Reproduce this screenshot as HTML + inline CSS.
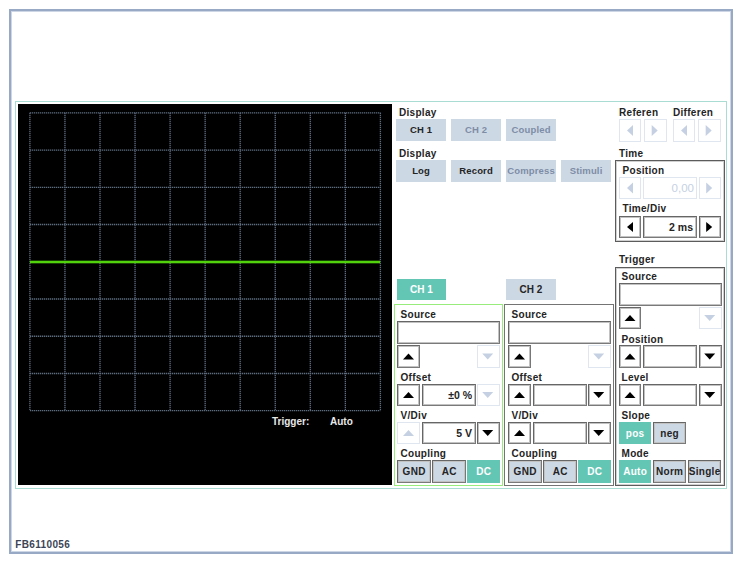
<!DOCTYPE html>
<html><head><meta charset="utf-8"><style>
html,body{margin:0;padding:0;background:#fff;}
body{width:742px;height:563px;position:relative;overflow:hidden;font-family:'Liberation Sans', sans-serif;}
</style></head><body>
<div style="position:absolute;left:9px;top:9px;width:724px;height:545px;box-sizing:border-box;border:2px solid #97a9c5;box-shadow:inset 0 0 0 1px #ccd6e5;"></div>
<div style="position:absolute;left:15.3px;top:540.03px;font:bold 10px/10px 'Liberation Sans', sans-serif;color:#3c4556;white-space:nowrap;letter-spacing:0.35px;">FB6110056</div>
<div style="position:absolute;left:15px;top:101px;width:712px;height:388px;box-sizing:border-box;border:1px solid #a9ddd3;"></div>
<div style="position:absolute;left:18px;top:104px;width:374px;height:381px;box-sizing:border-box;background:#000;"></div>
<svg width="742" height="563" style="position:absolute;left:0;top:0">
<line x1="29.90" y1="112.8" x2="29.90" y2="410.7" stroke="#5e6c80" stroke-width="1.3" stroke-dasharray="1.3 0.7"/>
<line x1="64.95" y1="112.8" x2="64.95" y2="410.7" stroke="#5e6c80" stroke-width="1.3" stroke-dasharray="1.3 0.7"/>
<line x1="100.00" y1="112.8" x2="100.00" y2="410.7" stroke="#5e6c80" stroke-width="1.3" stroke-dasharray="1.3 0.7"/>
<line x1="135.05" y1="112.8" x2="135.05" y2="410.7" stroke="#5e6c80" stroke-width="1.3" stroke-dasharray="1.3 0.7"/>
<line x1="170.10" y1="112.8" x2="170.10" y2="410.7" stroke="#5e6c80" stroke-width="1.3" stroke-dasharray="1.3 0.7"/>
<line x1="205.15" y1="112.8" x2="205.15" y2="410.7" stroke="#5e6c80" stroke-width="1.3" stroke-dasharray="1.3 0.7"/>
<line x1="240.20" y1="112.8" x2="240.20" y2="410.7" stroke="#5e6c80" stroke-width="1.3" stroke-dasharray="1.3 0.7"/>
<line x1="275.25" y1="112.8" x2="275.25" y2="410.7" stroke="#5e6c80" stroke-width="1.3" stroke-dasharray="1.3 0.7"/>
<line x1="310.30" y1="112.8" x2="310.30" y2="410.7" stroke="#5e6c80" stroke-width="1.3" stroke-dasharray="1.3 0.7"/>
<line x1="345.35" y1="112.8" x2="345.35" y2="410.7" stroke="#5e6c80" stroke-width="1.3" stroke-dasharray="1.3 0.7"/>
<line x1="380.40" y1="112.8" x2="380.40" y2="410.7" stroke="#5e6c80" stroke-width="1.3" stroke-dasharray="1.3 0.7"/>
<line x1="29.9" y1="112.80" x2="380.4" y2="112.80" stroke="#5e6c80" stroke-width="1.3" stroke-dasharray="1.3 0.7"/>
<line x1="29.9" y1="150.04" x2="380.4" y2="150.04" stroke="#5e6c80" stroke-width="1.3" stroke-dasharray="1.3 0.7"/>
<line x1="29.9" y1="187.28" x2="380.4" y2="187.28" stroke="#5e6c80" stroke-width="1.3" stroke-dasharray="1.3 0.7"/>
<line x1="29.9" y1="224.52" x2="380.4" y2="224.52" stroke="#5e6c80" stroke-width="1.3" stroke-dasharray="1.3 0.7"/>
<line x1="29.9" y1="261.76" x2="380.4" y2="261.76" stroke="#5e6c80" stroke-width="1.3" stroke-dasharray="1.3 0.7"/>
<line x1="29.9" y1="299.00" x2="380.4" y2="299.00" stroke="#5e6c80" stroke-width="1.3" stroke-dasharray="1.3 0.7"/>
<line x1="29.9" y1="336.24" x2="380.4" y2="336.24" stroke="#5e6c80" stroke-width="1.3" stroke-dasharray="1.3 0.7"/>
<line x1="29.9" y1="373.48" x2="380.4" y2="373.48" stroke="#5e6c80" stroke-width="1.3" stroke-dasharray="1.3 0.7"/>
<line x1="29.9" y1="410.72" x2="380.4" y2="410.72" stroke="#5e6c80" stroke-width="1.3" stroke-dasharray="1.3 0.7"/>
<rect x="30" y="260.7" width="350" height="2.6" fill="#52d20c"/>
</svg>
<div style="position:absolute;left:272px;top:416.54px;font:bold 10px/10px 'Liberation Sans', sans-serif;color:#e8e8e8;white-space:nowrap;">Trigger:</div>
<div style="position:absolute;left:330px;top:416.54px;font:bold 10px/10px 'Liberation Sans', sans-serif;color:#e8e8e8;white-space:nowrap;">Auto</div>
<div style="position:absolute;left:399px;top:107.83px;font:bold 10px/10px 'Liberation Sans', sans-serif;color:#242424;white-space:nowrap;letter-spacing:0.3px;">Display</div>
<div style="position:absolute;left:396px;top:119px;width:50px;height:22px;box-sizing:border-box;background:#cdd8e5;"></div>
<div style="position:absolute;left:396px;width:50px;text-align:center;top:125.36px;font:bold 9.5px/9.5px 'Liberation Sans', sans-serif;color:#242424;white-space:nowrap;letter-spacing:0.15px;text-indent:0.15px;">CH 1</div>
<div style="position:absolute;left:451px;top:119px;width:50px;height:22px;box-sizing:border-box;background:#cdd8e5;"></div>
<div style="position:absolute;left:451px;width:50px;text-align:center;top:125.36px;font:bold 9.5px/9.5px 'Liberation Sans', sans-serif;color:#7d8da6;white-space:nowrap;letter-spacing:0.15px;text-indent:0.15px;">CH 2</div>
<div style="position:absolute;left:506px;top:119px;width:50px;height:22px;box-sizing:border-box;background:#cdd8e5;"></div>
<div style="position:absolute;left:506px;width:50px;text-align:center;top:125.36px;font:bold 9.5px/9.5px 'Liberation Sans', sans-serif;color:#7d8da6;white-space:nowrap;letter-spacing:0.15px;text-indent:0.15px;">Coupled</div>
<div style="position:absolute;left:399px;top:148.53px;font:bold 10px/10px 'Liberation Sans', sans-serif;color:#242424;white-space:nowrap;letter-spacing:0.3px;">Display</div>
<div style="position:absolute;left:396px;top:160px;width:50px;height:22px;box-sizing:border-box;background:#cdd8e5;"></div>
<div style="position:absolute;left:396px;width:50px;text-align:center;top:166.36px;font:bold 9.5px/9.5px 'Liberation Sans', sans-serif;color:#242424;white-space:nowrap;letter-spacing:0.15px;text-indent:0.15px;">Log</div>
<div style="position:absolute;left:451px;top:160px;width:50px;height:22px;box-sizing:border-box;background:#cdd8e5;"></div>
<div style="position:absolute;left:451px;width:50px;text-align:center;top:166.36px;font:bold 9.5px/9.5px 'Liberation Sans', sans-serif;color:#242424;white-space:nowrap;letter-spacing:0.15px;text-indent:0.15px;">Record</div>
<div style="position:absolute;left:506px;top:160px;width:50px;height:22px;box-sizing:border-box;background:#cdd8e5;"></div>
<div style="position:absolute;left:506px;width:50px;text-align:center;top:166.36px;font:bold 9.5px/9.5px 'Liberation Sans', sans-serif;color:#7d8da6;white-space:nowrap;letter-spacing:0.15px;text-indent:0.15px;">Compress</div>
<div style="position:absolute;left:561px;top:160px;width:50px;height:22px;box-sizing:border-box;background:#cdd8e5;"></div>
<div style="position:absolute;left:561px;width:50px;text-align:center;top:166.36px;font:bold 9.5px/9.5px 'Liberation Sans', sans-serif;color:#7d8da6;white-space:nowrap;letter-spacing:0.15px;text-indent:0.15px;">Stimuli</div>
<div style="position:absolute;left:619px;top:107.63px;font:bold 10px/10px 'Liberation Sans', sans-serif;color:#242424;white-space:nowrap;letter-spacing:0.3px;">Referen</div>
<div style="position:absolute;left:673px;top:107.63px;font:bold 10px/10px 'Liberation Sans', sans-serif;color:#242424;white-space:nowrap;letter-spacing:0.3px;">Differen</div>
<div style="position:absolute;left:619px;top:119px;width:22px;height:23px;box-sizing:border-box;border:1px solid #dfe6ef;"></div>
<div style="position:absolute;left:644px;top:119px;width:23px;height:23px;box-sizing:border-box;border:1px solid #dfe6ef;"></div>
<div style="position:absolute;left:673px;top:119px;width:22px;height:23px;box-sizing:border-box;border:1px solid #dfe6ef;"></div>
<div style="position:absolute;left:698px;top:119px;width:23px;height:23px;box-sizing:border-box;border:1px solid #dfe6ef;"></div>
<div style="position:absolute;left:619px;top:148.84px;font:bold 10px/10px 'Liberation Sans', sans-serif;color:#242424;white-space:nowrap;letter-spacing:0.3px;">Time</div>
<div style="position:absolute;left:615px;top:160px;width:110px;height:82px;box-sizing:border-box;border:1px solid #5c5c5c;box-shadow:inset 0 0 0 1px #d0d0d0;"></div>
<div style="position:absolute;left:622.5px;top:166.03px;font:bold 10px/10px 'Liberation Sans', sans-serif;color:#242424;white-space:nowrap;letter-spacing:0.3px;">Position</div>
<div style="position:absolute;left:619px;top:177px;width:22px;height:22px;box-sizing:border-box;border:1px solid #dfe6ef;"></div>
<div style="position:absolute;left:643px;top:177px;width:54px;height:22px;box-sizing:border-box;border:1px solid #dfe6ef;"></div>
<div style="position:absolute;right:48px;top:182.57px;font:normal 11.5px/11.5px 'Liberation Sans', sans-serif;color:#c5d1e3;white-space:nowrap;">0,00</div>
<div style="position:absolute;left:699px;top:177px;width:22px;height:22px;box-sizing:border-box;border:1px solid #dfe6ef;"></div>
<div style="position:absolute;left:622.5px;top:204.34px;font:bold 10px/10px 'Liberation Sans', sans-serif;color:#242424;white-space:nowrap;letter-spacing:0.3px;">Time/Div</div>
<div style="position:absolute;left:619px;top:216px;width:22px;height:22px;box-sizing:border-box;border:1px solid #666;border-bottom-color:#7a7a7a;border-right-color:#777;box-shadow:inset 0 0 0 1px #c2c2c2;"></div>
<div style="position:absolute;left:643px;top:216px;width:54px;height:22px;box-sizing:border-box;border:1px solid #666;border-bottom-color:#7a7a7a;border-right-color:#777;box-shadow:inset 0 0 0 1px #c2c2c2;"></div>
<div style="position:absolute;right:49px;top:222.11px;font:bold 10.5px/10.5px 'Liberation Sans', sans-serif;color:#242424;white-space:nowrap;">2 ms</div>
<div style="position:absolute;left:699px;top:216px;width:22px;height:22px;box-sizing:border-box;border:1px solid #666;border-bottom-color:#7a7a7a;border-right-color:#777;box-shadow:inset 0 0 0 1px #c2c2c2;"></div>
<div style="position:absolute;left:619px;top:254.53px;font:bold 10px/10px 'Liberation Sans', sans-serif;color:#242424;white-space:nowrap;letter-spacing:0.3px;">Trigger</div>
<div style="position:absolute;left:615px;top:267px;width:110px;height:219px;box-sizing:border-box;border:1px solid #5c5c5c;box-shadow:inset 0 0 0 1px #d0d0d0;"></div>
<div style="position:absolute;left:621.5px;top:271.84px;font:bold 10px/10px 'Liberation Sans', sans-serif;color:#242424;white-space:nowrap;letter-spacing:0.3px;">Source</div>
<div style="position:absolute;left:619px;top:283px;width:103px;height:23px;box-sizing:border-box;border:1px solid #666;border-bottom-color:#7a7a7a;border-right-color:#777;box-shadow:inset 0 0 0 1px #c2c2c2;"></div>
<div style="position:absolute;left:619px;top:307px;width:22px;height:22px;box-sizing:border-box;border:1px solid #666;border-bottom-color:#7a7a7a;border-right-color:#777;box-shadow:inset 0 0 0 1px #c2c2c2;"></div>
<div style="position:absolute;left:699px;top:307px;width:23px;height:22px;box-sizing:border-box;border:1px solid #dfe6ef;"></div>
<div style="position:absolute;left:621.5px;top:334.64px;font:bold 10px/10px 'Liberation Sans', sans-serif;color:#242424;white-space:nowrap;letter-spacing:0.3px;">Position</div>
<div style="position:absolute;left:619px;top:345px;width:22px;height:23px;box-sizing:border-box;border:1px solid #666;border-bottom-color:#7a7a7a;border-right-color:#777;box-shadow:inset 0 0 0 1px #c2c2c2;"></div>
<div style="position:absolute;left:643px;top:345px;width:54px;height:23px;box-sizing:border-box;border:1px solid #666;border-bottom-color:#7a7a7a;border-right-color:#777;box-shadow:inset 0 0 0 1px #c2c2c2;"></div>
<div style="position:absolute;left:699px;top:345px;width:23px;height:23px;box-sizing:border-box;border:1px solid #666;border-bottom-color:#7a7a7a;border-right-color:#777;box-shadow:inset 0 0 0 1px #c2c2c2;"></div>
<div style="position:absolute;left:621.5px;top:373.34px;font:bold 10px/10px 'Liberation Sans', sans-serif;color:#242424;white-space:nowrap;letter-spacing:0.3px;">Level</div>
<div style="position:absolute;left:619px;top:384px;width:22px;height:22px;box-sizing:border-box;border:1px solid #666;border-bottom-color:#7a7a7a;border-right-color:#777;box-shadow:inset 0 0 0 1px #c2c2c2;"></div>
<div style="position:absolute;left:643px;top:384px;width:54px;height:22px;box-sizing:border-box;border:1px solid #666;border-bottom-color:#7a7a7a;border-right-color:#777;box-shadow:inset 0 0 0 1px #c2c2c2;"></div>
<div style="position:absolute;left:699px;top:384px;width:23px;height:22px;box-sizing:border-box;border:1px solid #666;border-bottom-color:#7a7a7a;border-right-color:#777;box-shadow:inset 0 0 0 1px #c2c2c2;"></div>
<div style="position:absolute;left:621.5px;top:411.44px;font:bold 10px/10px 'Liberation Sans', sans-serif;color:#242424;white-space:nowrap;letter-spacing:0.3px;">Slope</div>
<div style="position:absolute;left:619px;top:422px;width:32px;height:22px;box-sizing:border-box;background:#63c6b5;"></div>
<div style="position:absolute;left:619px;width:32px;text-align:center;top:428.54px;font:bold 10px/10px 'Liberation Sans', sans-serif;color:#fff;white-space:nowrap;letter-spacing:0.3px;text-indent:0.3px;">pos</div>
<div style="position:absolute;left:653px;top:422px;width:33px;height:22px;box-sizing:border-box;background:#cdd8e5;border:1px solid #666;border-bottom-color:#7a7a7a;border-right-color:#777;box-shadow:inset 0 0 0 1px #c2c2c2;"></div>
<div style="position:absolute;left:653px;width:33px;text-align:center;top:428.54px;font:bold 10px/10px 'Liberation Sans', sans-serif;color:#242424;white-space:nowrap;letter-spacing:0.3px;text-indent:0.3px;">neg</div>
<div style="position:absolute;left:621.5px;top:449.04px;font:bold 10px/10px 'Liberation Sans', sans-serif;color:#242424;white-space:nowrap;letter-spacing:0.3px;">Mode</div>
<div style="position:absolute;left:619px;top:460px;width:32px;height:23px;box-sizing:border-box;background:#63c6b5;"></div>
<div style="position:absolute;left:619px;width:32px;text-align:center;top:467.04px;font:bold 10px/10px 'Liberation Sans', sans-serif;color:#fff;white-space:nowrap;letter-spacing:0.3px;text-indent:0.3px;">Auto</div>
<div style="position:absolute;left:653px;top:460px;width:33px;height:23px;box-sizing:border-box;background:#cdd8e5;border:1px solid #666;border-bottom-color:#7a7a7a;border-right-color:#777;box-shadow:inset 0 0 0 1px #c2c2c2;"></div>
<div style="position:absolute;left:653px;width:33px;text-align:center;top:467.04px;font:bold 10px/10px 'Liberation Sans', sans-serif;color:#242424;white-space:nowrap;letter-spacing:0.3px;text-indent:0.3px;">Norm</div>
<div style="position:absolute;left:688px;top:460px;width:33px;height:23px;box-sizing:border-box;background:#cdd8e5;border:1px solid #666;border-bottom-color:#7a7a7a;border-right-color:#777;box-shadow:inset 0 0 0 1px #c2c2c2;"></div>
<div style="position:absolute;left:688px;width:33px;text-align:center;top:467.04px;font:bold 10px/10px 'Liberation Sans', sans-serif;color:#242424;white-space:nowrap;letter-spacing:0.3px;text-indent:0.3px;">Single</div>
<div style="position:absolute;left:397px;top:279px;width:49px;height:21px;box-sizing:border-box;background:#63c6b5;"></div>
<div style="position:absolute;left:397px;width:49px;text-align:center;top:284.84px;font:bold 10px/10px 'Liberation Sans', sans-serif;color:#fff;white-space:nowrap;letter-spacing:0px;text-indent:0px;">CH 1</div>
<div style="position:absolute;left:506px;top:279px;width:50px;height:21px;box-sizing:border-box;background:#cdd8e5;"></div>
<div style="position:absolute;left:506px;width:50px;text-align:center;top:284.84px;font:bold 10px/10px 'Liberation Sans', sans-serif;color:#242424;white-space:nowrap;letter-spacing:0px;text-indent:0px;">CH 2</div>
<div style="position:absolute;left:394px;top:304px;width:109px;height:182px;box-sizing:border-box;border:1px solid #98ec7c;"></div>
<div style="position:absolute;left:400.5px;top:309.84px;font:bold 10px/10px 'Liberation Sans', sans-serif;color:#242424;white-space:nowrap;letter-spacing:0.3px;">Source</div>
<div style="position:absolute;left:397px;top:321px;width:103px;height:23px;box-sizing:border-box;border:1px solid #666;border-bottom-color:#7a7a7a;border-right-color:#777;box-shadow:inset 0 0 0 1px #c2c2c2;"></div>
<div style="position:absolute;left:397px;top:345px;width:23px;height:23px;box-sizing:border-box;border:1px solid #666;border-bottom-color:#7a7a7a;border-right-color:#777;box-shadow:inset 0 0 0 1px #c2c2c2;"></div>
<div style="position:absolute;left:477px;top:345px;width:23px;height:23px;box-sizing:border-box;border:1px solid #dfe6ef;"></div>
<div style="position:absolute;left:400.5px;top:372.84px;font:bold 10px/10px 'Liberation Sans', sans-serif;color:#242424;white-space:nowrap;letter-spacing:0.3px;">Offset</div>
<div style="position:absolute;left:397px;top:384px;width:23px;height:22px;box-sizing:border-box;border:1px solid #666;border-bottom-color:#7a7a7a;border-right-color:#777;box-shadow:inset 0 0 0 1px #c2c2c2;"></div>
<div style="position:absolute;left:422px;top:384px;width:54px;height:22px;box-sizing:border-box;border:1px solid #666;border-bottom-color:#7a7a7a;border-right-color:#777;box-shadow:inset 0 0 0 1px #c2c2c2;"></div>
<div style="position:absolute;right:270px;top:390.11px;font:bold 10.5px/10.5px 'Liberation Sans', sans-serif;color:#242424;white-space:nowrap;">&plusmn;0 %</div>
<div style="position:absolute;left:477px;top:384px;width:23px;height:22px;box-sizing:border-box;border:1px solid #dfe6ef;"></div>
<div style="position:absolute;left:400.5px;top:410.84px;font:bold 10px/10px 'Liberation Sans', sans-serif;color:#242424;white-space:nowrap;letter-spacing:0.3px;">V/Div</div>
<div style="position:absolute;left:397px;top:422px;width:23px;height:22px;box-sizing:border-box;border:1px solid #dfe6ef;"></div>
<div style="position:absolute;left:422px;top:422px;width:54px;height:22px;box-sizing:border-box;border:1px solid #666;border-bottom-color:#7a7a7a;border-right-color:#777;box-shadow:inset 0 0 0 1px #c2c2c2;"></div>
<div style="position:absolute;right:270px;top:428.11px;font:bold 10.5px/10.5px 'Liberation Sans', sans-serif;color:#242424;white-space:nowrap;">5 V</div>
<div style="position:absolute;left:477px;top:422px;width:23px;height:22px;box-sizing:border-box;border:1px solid #666;border-bottom-color:#7a7a7a;border-right-color:#777;box-shadow:inset 0 0 0 1px #c2c2c2;"></div>
<div style="position:absolute;left:400.5px;top:448.54px;font:bold 10px/10px 'Liberation Sans', sans-serif;color:#242424;white-space:nowrap;letter-spacing:0.3px;">Coupling</div>
<div style="position:absolute;left:397px;top:460px;width:34px;height:23px;box-sizing:border-box;background:#cdd8e5;border:1px solid #666;border-bottom-color:#7a7a7a;border-right-color:#777;box-shadow:inset 0 0 0 1px #c2c2c2;"></div>
<div style="position:absolute;left:397px;width:34px;text-align:center;top:467.04px;font:bold 10px/10px 'Liberation Sans', sans-serif;color:#242424;white-space:nowrap;letter-spacing:0.3px;text-indent:0.3px;">GND</div>
<div style="position:absolute;left:432px;top:460px;width:34px;height:23px;box-sizing:border-box;background:#cdd8e5;border:1px solid #666;border-bottom-color:#7a7a7a;border-right-color:#777;box-shadow:inset 0 0 0 1px #c2c2c2;"></div>
<div style="position:absolute;left:432px;width:34px;text-align:center;top:467.04px;font:bold 10px/10px 'Liberation Sans', sans-serif;color:#242424;white-space:nowrap;letter-spacing:0.3px;text-indent:0.3px;">AC</div>
<div style="position:absolute;left:467px;top:460px;width:33px;height:23px;box-sizing:border-box;background:#63c6b5;"></div>
<div style="position:absolute;left:467px;width:33px;text-align:center;top:467.04px;font:bold 10px/10px 'Liberation Sans', sans-serif;color:#fff;white-space:nowrap;letter-spacing:0.3px;text-indent:0.3px;">DC</div>
<div style="position:absolute;left:504px;top:304px;width:110px;height:182px;box-sizing:border-box;border:1px solid #747474;"></div>
<div style="position:absolute;left:511.5px;top:309.84px;font:bold 10px/10px 'Liberation Sans', sans-serif;color:#242424;white-space:nowrap;letter-spacing:0.3px;">Source</div>
<div style="position:absolute;left:508px;top:321px;width:103px;height:23px;box-sizing:border-box;border:1px solid #666;border-bottom-color:#7a7a7a;border-right-color:#777;box-shadow:inset 0 0 0 1px #c2c2c2;"></div>
<div style="position:absolute;left:508px;top:345px;width:23px;height:23px;box-sizing:border-box;border:1px solid #666;border-bottom-color:#7a7a7a;border-right-color:#777;box-shadow:inset 0 0 0 1px #c2c2c2;"></div>
<div style="position:absolute;left:588px;top:345px;width:23px;height:23px;box-sizing:border-box;border:1px solid #dfe6ef;"></div>
<div style="position:absolute;left:511.5px;top:372.84px;font:bold 10px/10px 'Liberation Sans', sans-serif;color:#242424;white-space:nowrap;letter-spacing:0.3px;">Offset</div>
<div style="position:absolute;left:508px;top:384px;width:23px;height:22px;box-sizing:border-box;border:1px solid #666;border-bottom-color:#7a7a7a;border-right-color:#777;box-shadow:inset 0 0 0 1px #c2c2c2;"></div>
<div style="position:absolute;left:533px;top:384px;width:54px;height:22px;box-sizing:border-box;border:1px solid #666;border-bottom-color:#7a7a7a;border-right-color:#777;box-shadow:inset 0 0 0 1px #c2c2c2;"></div>
<div style="position:absolute;left:588px;top:384px;width:23px;height:22px;box-sizing:border-box;border:1px solid #666;border-bottom-color:#7a7a7a;border-right-color:#777;box-shadow:inset 0 0 0 1px #c2c2c2;"></div>
<div style="position:absolute;left:511.5px;top:410.84px;font:bold 10px/10px 'Liberation Sans', sans-serif;color:#242424;white-space:nowrap;letter-spacing:0.3px;">V/Div</div>
<div style="position:absolute;left:508px;top:422px;width:23px;height:22px;box-sizing:border-box;border:1px solid #666;border-bottom-color:#7a7a7a;border-right-color:#777;box-shadow:inset 0 0 0 1px #c2c2c2;"></div>
<div style="position:absolute;left:533px;top:422px;width:54px;height:22px;box-sizing:border-box;border:1px solid #666;border-bottom-color:#7a7a7a;border-right-color:#777;box-shadow:inset 0 0 0 1px #c2c2c2;"></div>
<div style="position:absolute;left:588px;top:422px;width:23px;height:22px;box-sizing:border-box;border:1px solid #666;border-bottom-color:#7a7a7a;border-right-color:#777;box-shadow:inset 0 0 0 1px #c2c2c2;"></div>
<div style="position:absolute;left:511.5px;top:448.54px;font:bold 10px/10px 'Liberation Sans', sans-serif;color:#242424;white-space:nowrap;letter-spacing:0.3px;">Coupling</div>
<div style="position:absolute;left:508px;top:460px;width:34px;height:23px;box-sizing:border-box;background:#cdd8e5;border:1px solid #666;border-bottom-color:#7a7a7a;border-right-color:#777;box-shadow:inset 0 0 0 1px #c2c2c2;"></div>
<div style="position:absolute;left:508px;width:34px;text-align:center;top:467.04px;font:bold 10px/10px 'Liberation Sans', sans-serif;color:#242424;white-space:nowrap;letter-spacing:0.3px;text-indent:0.3px;">GND</div>
<div style="position:absolute;left:543px;top:460px;width:34px;height:23px;box-sizing:border-box;background:#cdd8e5;border:1px solid #666;border-bottom-color:#7a7a7a;border-right-color:#777;box-shadow:inset 0 0 0 1px #c2c2c2;"></div>
<div style="position:absolute;left:543px;width:34px;text-align:center;top:467.04px;font:bold 10px/10px 'Liberation Sans', sans-serif;color:#242424;white-space:nowrap;letter-spacing:0.3px;text-indent:0.3px;">AC</div>
<div style="position:absolute;left:578px;top:460px;width:33px;height:23px;box-sizing:border-box;background:#63c6b5;"></div>
<div style="position:absolute;left:578px;width:33px;text-align:center;top:467.04px;font:bold 10px/10px 'Liberation Sans', sans-serif;color:#fff;white-space:nowrap;letter-spacing:0.3px;text-indent:0.3px;">DC</div>
<svg width="742" height="563" style="position:absolute;left:0;top:0"><polygon points="633.0,125.0 627.0,130.5 633.0,136.0" fill="#c5d1e2"/><polygon points="651.7,125.0 657.7,130.5 651.7,136.0" fill="#c5d1e2"/><polygon points="687.0,125.0 681.0,130.5 687.0,136.0" fill="#c5d1e2"/><polygon points="705.7,125.0 711.7,130.5 705.7,136.0" fill="#c5d1e2"/><polygon points="633.0,182.5 627.0,188.0 633.0,193.5" fill="#c5d1e2"/><polygon points="706.2,182.5 712.2,188.0 706.2,193.5" fill="#c5d1e2"/><polygon points="633.0,222.0 627.0,227.0 633.0,232.0" fill="#000"/><polygon points="706.2,222.0 712.2,227.0 706.2,232.0" fill="#000"/><polygon points="624.5,321.0 630.0,315.0 635.5,321.0" fill="#000"/><polygon points="704.2,315.0 709.7,321.0 715.2,315.0" fill="#c5d1e2"/><polygon points="624.5,359.5 630.0,353.5 635.5,359.5" fill="#000"/><polygon points="704.2,353.5 709.7,359.5 715.2,353.5" fill="#000"/><polygon points="624.5,398.0 630.0,392.0 635.5,398.0" fill="#000"/><polygon points="704.2,392.0 709.7,398.0 715.2,392.0" fill="#000"/><polygon points="403.0,359.5 408.5,353.5 414.0,359.5" fill="#000"/><polygon points="482.2,353.5 487.7,359.5 493.2,353.5" fill="#c5d1e2"/><polygon points="403.0,398.0 408.5,392.0 414.0,398.0" fill="#000"/><polygon points="482.2,392.0 487.7,398.0 493.2,392.0" fill="#c5d1e2"/><polygon points="403.0,436.0 408.5,430.0 414.0,436.0" fill="#c5d1e2"/><polygon points="482.2,430.0 487.7,436.0 493.2,430.0" fill="#000"/><polygon points="514.0,359.5 519.5,353.5 525.0,359.5" fill="#000"/><polygon points="593.2,353.5 598.7,359.5 604.2,353.5" fill="#c5d1e2"/><polygon points="514.0,398.0 519.5,392.0 525.0,398.0" fill="#000"/><polygon points="593.2,392.0 598.7,398.0 604.2,392.0" fill="#000"/><polygon points="514.0,436.0 519.5,430.0 525.0,436.0" fill="#000"/><polygon points="593.2,430.0 598.7,436.0 604.2,430.0" fill="#000"/></svg>
</body></html>
